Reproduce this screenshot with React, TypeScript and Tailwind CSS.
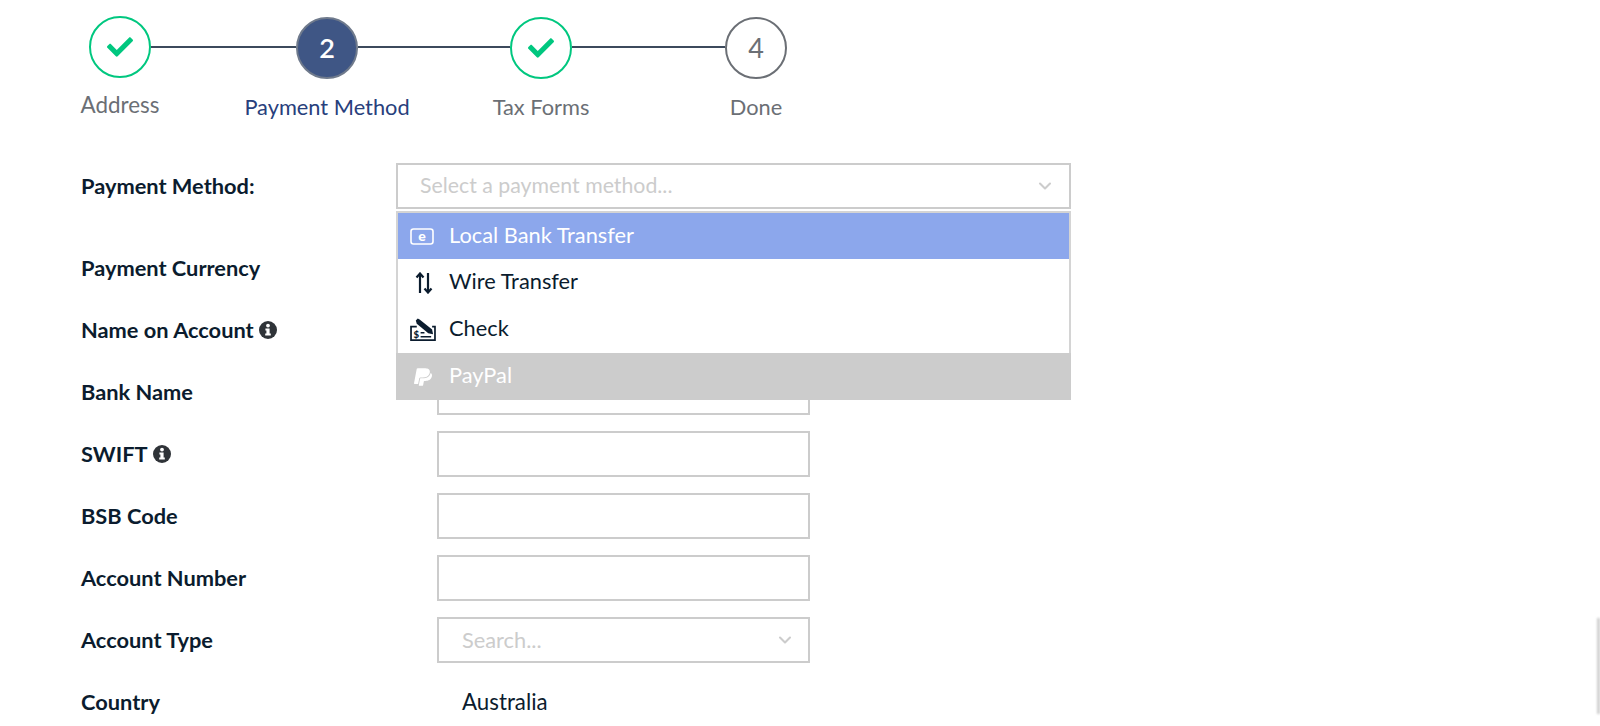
import { FaCheck, FaPaypal } from "react-icons/fa";
import { ChevronDown } from "lucide-react";

const lato = "font-['Lato','Noto_Sans',sans-serif]";

function BankIcon() {
  return (
    <svg width="24" height="17" viewBox="0 0 24 17" fill="none" className="mr-[4px] text-white">
      <rect x="1" y="1" width="22" height="15" rx="2.5" stroke="currentColor" strokeWidth="1.6" />
      <text x="12" y="12.8" textAnchor="middle" fontSize="14" fontWeight="900" fill="currentColor" fontFamily="Lato">e</text>
    </svg>
  );
}

function WireIcon() {
  return (
    <svg width="18" height="22" viewBox="0 0 18 22" fill="none" stroke="#0b1c2e" strokeWidth="2.2">
      <path d="M5 21V2" />
      <path d="M1.5 5.5L5 1.5L8.5 5.5" />
      <path d="M13 1V20" />
      <path d="M9.5 16.5L13 20.5L16.5 16.5" />
    </svg>
  );
}

function CheckIcon() {
  return (
    <svg width="28" height="23" viewBox="0 0 27 24" fill="none" stroke="#0b1c2e" strokeWidth="1.8" className="mr-[2px]">
      <path d="M7 9H1v14h25V9h-3" />
      <path d="M6 2.5L8 .5l2 1 13 10.5 1 5-5-1L7 6z" fill="#0b1c2e" stroke="none" />
      <path d="M11 19.5h11M11 15.5h4" strokeWidth="1.6" />
      <text x="3.5" y="20.5" fontSize="10" fontWeight="900" fill="#0b1c2e" stroke="none" fontFamily="Lato">$</text>
    </svg>
  );
}

function InfoIcon() {
  return (
    <svg width="18" height="18" viewBox="0 0 18 18" className="shrink-0">
      <circle cx="9" cy="9" r="9" fill="#2f3338" />
      <circle cx="9" cy="4.6" r="1.9" fill="#fff" />
      <path d="M6.4 7.4H10.6V12.4H11.8V14.6H6.2V12.4H7.4V9.6H6.4z" fill="#fff" />
    </svg>
  );
}

function Step({ label, state, num, top = false }: { label: string; state: "done" | "active" | "todo"; num?: number; top?: boolean }) {
  const circle =
    state === "done"
      ? "border-[#00c77f] bg-white text-[#00c77f]"
      : state === "active"
        ? "border-[#6f7a8c] bg-[#3f5685] font-semibold text-white"
        : "border-[#6b6f75] bg-white text-[#6b6f75]";
  const text = state === "active" ? "text-[#28407c]" : "text-[#6b6f75]";
  return (
    <div className={`relative flex w-[62px] shrink-0 flex-col items-center ${top ? "-mt-px" : ""}`}>
      <div className={`flex h-[62px] w-[62px] items-center justify-center rounded-full border-2 text-[27px] ${circle}`}>
        {state === "done" ? <FaCheck className="h-[26px] w-[26px]" /> : num}
      </div>
      <div className={`${top ? "mt-[12px] text-[22.4px]" : "mt-[13px] text-[21.8px]"} whitespace-nowrap leading-[30px] ${text}`}>{label}</div>
    </div>
  );
}

function Connector({ width }: { width: string }) {
  return <div className={`mt-[29px] h-[2px] shrink-0 bg-[#3c4a5c] ${width}`} />;
}

function Row({ label, info, children }: { label: string; info?: boolean; children?: React.ReactNode }) {
  return (
    <div className="flex h-[46px] items-center">
      <div className="flex w-[356px] shrink-0 items-center gap-[5px] text-[21.8px] font-bold text-[#0b1c2e]">
        {label}
        {info && <InfoIcon />}
      </div>
      {children}
    </div>
  );
}

function Field() {
  return <div className="h-[46px] w-[373px] border-2 border-[#cccccc] bg-white" />;
}

function Option({ icon, label, className }: { icon: React.ReactNode; label: string; className: string }) {
  return (
    <div className={`flex items-center text-[21.8px] ${className}`}>
      <div className="flex w-[51px] shrink-0 justify-center">{icon}</div>
      <span className="-translate-y-px">{label}</span>
    </div>
  );
}

export default function App() {
  return (
    <div className={`relative h-[726px] overflow-hidden bg-white pl-[81px] pt-[17px] ${lato}`}>
      <div className="flex items-start pl-[8px]">
        <Step label="Address" state="done" top />
        <Connector width="w-[145px]" />
        <Step label="Payment Method" state="active" num={2} />
        <Connector width="w-[152px]" />
        <Step label="Tax Forms" state="done" />
        <Connector width="w-[153px]" />
        <Step label="Done" state="todo" num={4} />
      </div>

      <div className="mt-[41px] flex flex-col gap-[16px]">
        <div className="relative mb-[20px]">
          <div className="flex h-[46px] items-center">
            <div className="w-[315px] shrink-0 text-[21.8px] font-bold text-[#0b1c2e]">Payment Method:</div>
            <div className="flex h-[46px] w-[675px] items-center justify-between border-2 border-[#cccccc] bg-white pl-[22px] pr-[14px] text-[21.3px] text-[#cccccc]">
              Select a payment method...
              <ChevronDown className="h-[20px] w-[20px]" strokeWidth={2.5} />
            </div>
          </div>
          <div className="absolute left-[315px] top-[48px] z-10 w-[675px] border-x-2 border-t-2 border-[#d4d4d4] bg-white">
            <Option icon={<BankIcon />} label="Local Bank Transfer" className="h-[46px] bg-[#8ca7ec] text-white" />
            <Option icon={<WireIcon />} label="Wire Transfer" className="h-[47px] text-[#0b1c2e]" />
            <Option icon={<CheckIcon />} label="Check" className="h-[47px] text-[#0b1c2e]" />
            <Option
              icon={<FaPaypal className="mr-[2px] h-[20px] w-[18px]" preserveAspectRatio="none" />}
              label="PayPal"
              className="-mx-[2px] h-[47px] bg-[#cccccc] pl-[2px] text-white"
            />
          </div>
        </div>
        <Row label="Payment Currency" />
        <Row label="Name on Account" info />
        <Row label="Bank Name"><Field /></Row>
        <Row label="SWIFT" info><Field /></Row>
        <Row label="BSB Code"><Field /></Row>
        <Row label="Account Number"><Field /></Row>
        <Row label="Account Type">
          <div className="flex h-[46px] w-[373px] items-center justify-between border-2 border-[#cccccc] bg-white pl-[23px] pr-[13px] text-[21.8px] text-[#cccccc]">
            Search...
            <ChevronDown className="h-[20px] w-[20px]" strokeWidth={2.5} />
          </div>
        </Row>
        <Row label="Country">
          <div className="pl-[25px] text-[22.3px] text-[#0b1c2e]">Australia</div>
        </Row>
      </div>

      <div className="absolute right-0 top-[618px] h-[96px] w-[3px] bg-[#cfcfcf] blur-[1px]" />
    </div>
  );
}
